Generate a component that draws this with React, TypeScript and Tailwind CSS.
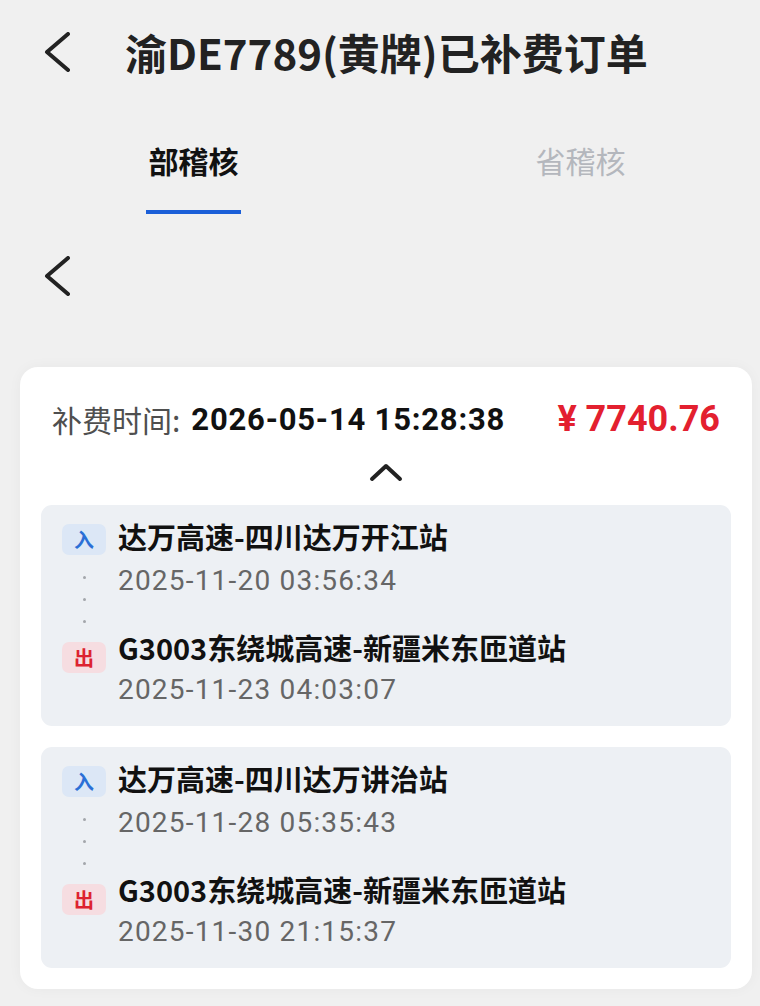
import React from "react";

interface Trip {
  entryName: string;
  entryTime: string;
  exitName: string;
  exitTime: string;
}

const trips: Trip[] = [
  {
    entryName: "达万高速-四川达万开江站",
    entryTime: "2025-11-20 03:56:34",
    exitName: "G3003东绕城高速-新疆米东匝道站",
    exitTime: "2025-11-23 04:03:07",
  },
  {
    entryName: "达万高速-四川达万讲治站",
    entryTime: "2025-11-28 05:35:43",
    exitName: "G3003东绕城高速-新疆米东匝道站",
    exitTime: "2025-11-30 21:15:37",
  },
];

const cjk = "font-['Noto_Sans_CJK_SC',sans-serif]";
const num = "font-['Roboto','Noto_Sans_CJK_SC',sans-serif]";

function BackChevron() {
  return (
    <svg width="30" height="40" viewBox="0 0 30 40" fill="none">
      <polyline
        points="26,2 5,20 26,38"
        stroke="#222222"
        strokeWidth="4"
        strokeLinecap="round"
        strokeLinejoin="round"
      />
    </svg>
  );
}

function Badge({ kind }: { kind: "in" | "out" }) {
  return (
    <div
      className={
        kind === "in"
          ? "flex h-[31px] w-[44px] items-center justify-center rounded-[7px] bg-[#dce7f6] text-[20px] font-bold text-[#2b6fd6]"
          : "flex h-[31px] w-[44px] items-center justify-center rounded-[7px] bg-[#f6dde1] text-[20px] font-bold text-[#dd2230]"
      }
    >
      {kind === "in" ? "入" : "出"}
    </div>
  );
}

function TripBox({ trip }: { trip: Trip }) {
  return (
    <div className="flex gap-[12px] rounded-[11px] bg-[#edf0f4] px-[21px] pb-[16px] pt-[11px]">
      <div className="flex w-[44px] flex-col items-center pt-[8px]">
        <Badge kind="in" />
        <div className="mt-[21px] flex flex-col items-center gap-[19px]">
          <div className="h-[3px] w-[3px] rounded-full bg-[#a3a6ab]" />
          <div className="h-[3px] w-[3px] rounded-full bg-[#a3a6ab]" />
          <div className="h-[3px] w-[3px] rounded-full bg-[#a3a6ab]" />
        </div>
        <div className="mt-[19px]">
          <Badge kind="out" />
        </div>
      </div>
      <div className="flex flex-col">
        <div className={`${cjk} text-[29px] font-bold leading-[40px] text-[#111111]`}>
          {trip.entryName}
        </div>
        <div className={`${num} mt-[5px] text-[28px] leading-[40px] tracking-[1.2px] text-[#666666]`}>
          {trip.entryTime}
        </div>
        <div className={`${cjk} mt-[26px] text-[29px] font-bold leading-[40px] text-[#111111]`}>
          {trip.exitName}
        </div>
        <div className={`${num} mt-[3px] text-[28px] leading-[40px] tracking-[1.2px] text-[#666666]`}>
          {trip.exitTime}
        </div>
      </div>
    </div>
  );
}

export default function App() {
  return (
    <div className={`${cjk} min-h-screen w-[760px] bg-[#f0f0f0] pb-[17px]`}>
      <div className="flex h-[104px] items-center gap-[53px] px-[42px]">
        <BackChevron />
        <h1 className="text-[42px] font-bold leading-none text-[#222222]">
          渝DE7789(黄牌)已补费订单
        </h1>
      </div>

      <div className="grid grid-cols-[387px_387px] pt-[36px]">
        <div className="flex flex-col items-center">
          <span className="text-[30px] font-bold leading-[40px] text-[#111111]">部稽核</span>
          <div className="mt-[30px] h-[4px] w-[95px] bg-[#1b5fd8]" />
        </div>
        <div className="flex flex-col items-center">
          <span className="text-[30px] leading-[40px] text-[#b4b7bd]">省稽核</span>
        </div>
      </div>

      <div className="mt-[40px] flex h-[44px] items-center px-[42px]">
        <BackChevron />
      </div>

      <div className="ml-[20px] mt-[69px] w-[732px] rounded-[18px] bg-white pb-[21px] pt-[32px] shadow-[0_0_14px_rgba(0,0,0,0.04)]">
        <div className="flex h-[40px] items-center justify-between px-[32px]">
          <div className="flex items-center gap-[11px]">
            <span className="text-[30px] leading-none text-[#4f4f4f]">补费时间:</span>
            <span className={`${num} text-[31px] font-bold leading-none tracking-[0.8px] text-[#111111]`}>
              2026-05-14 15:28:38
            </span>
          </div>
          <span className={`${num} text-[36px] font-bold leading-none text-[#e3202f]`}>
            ¥ 7740.76
          </span>
        </div>
        <div className="flex h-[66px] items-center justify-center">
          <svg width="34" height="20" viewBox="0 0 34 20" fill="none">
            <polyline
              points="3,17 17,4 31,17"
              stroke="#222222"
              strokeWidth="4"
              strokeLinecap="round"
              strokeLinejoin="round"
            />
          </svg>
        </div>
        <div className="flex flex-col gap-[21px] px-[21px]">
          {trips.map((trip, i) => (
            <TripBox key={i} trip={trip} />
          ))}
        </div>
      </div>
    </div>
  );
}
